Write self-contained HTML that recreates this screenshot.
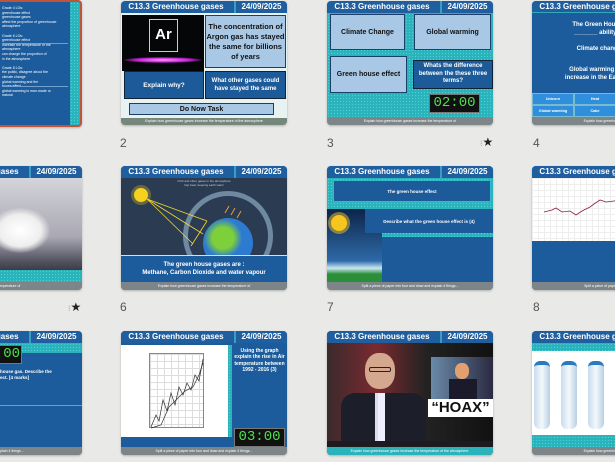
<!DOCTYPE html>
<html style="overflow:hidden"><head><meta charset="utf-8"><style>
*{margin:0;padding:0;box-sizing:border-box}
html,body{width:615px;height:462px;overflow:hidden}
body{background:#e9e9e8;position:relative;font-family:"Liberation Sans",sans-serif}
.s{position:absolute;width:166px;height:124px;border-radius:4px;overflow:hidden;background:#1d5c9c;box-shadow:0 1px 2px rgba(0,0,0,.25)}
.h{position:absolute;left:0;top:0;right:0;height:12px;background:#1f5f9f;color:#fff;font-weight:bold;font-size:8px;line-height:12px}
.h .t{position:absolute;left:0;width:110px;text-align:center}
.h .d{position:absolute;left:113px;width:53px;text-align:center;border-left:2px solid #35a0c0}
.f{position:absolute;left:0;right:0;bottom:0;height:8px;background:#7d8589;color:#fff;font-size:3.5px;line-height:8px;text-align:center}
.b{position:absolute;font-weight:bold;text-align:center;display:flex;align-items:center;justify-content:center}
.lb{background:#a8c8e6;border:1px solid #1b3f66;color:#111}
.db{background:#1c5a9a;color:#fff}
.n{position:absolute;font-size:12px;color:#555}
.teal{background:#2ab3bb;background-image:radial-gradient(#4fd0d6 0.6px,transparent 0.8px);background-size:3px 3px}
.tm{position:absolute;background:#111;border:1px solid #777;color:#4ee04e;font-family:"Liberation Mono",monospace;text-align:center}
</style></head><body>

<div class="s" style="left:-84px;top:0;height:127px;border:2px solid #c0533a;background:#1d5c9c">
<div style="position:absolute;right:0;top:0;bottom:0;width:10px" class="teal"></div>
<div style="position:absolute;left:84px;top:4px;width:68px;color:#fff;font-size:3.5px;line-height:4.6px">
Grade 4 LOs:<br>greenhouse effect<br>greenhouse gases<br>affect the proportion of greenhouse<br>atmosphere<br><br>Grade 6 LOs:<br>greenhouse effect<br>increase the temperature of the<br>atmosphere<br>can change the proportion of<br>in the atmosphere<br><br>Grade 8 LOs:<br>the public, disagree about the<br>climate change<br>global warming and the<br>house effect<br>global warming is man-made or<br>natural</div>
<div style="position:absolute;left:84px;right:12px;top:41px;height:1px;background:#6fa0d0"></div>
<div style="position:absolute;left:84px;right:12px;top:84px;height:1px;background:#6fa0d0"></div>
</div>

<div class="s" style="left:121px;top:1px;background:#e8f2f0">
<div class="h"><span class="t">C13.3 Greenhouse gases</span><span class="d">24/09/2025</span></div>
<div style="position:absolute;left:1px;top:14px;width:82px;height:56px;background:#050608">
<div style="position:absolute;left:27px;top:4px;width:29px;height:33px;border:1px solid #ccc;color:#fff;font-weight:bold;font-size:15px;text-align:center;line-height:30px">Ar</div>
<div style="position:absolute;left:2px;top:42px;width:78px;height:6px;border-radius:50%;background:radial-gradient(#ff9cff,#c020d0 50%,transparent 75%)"></div></div>
<div class="b lb" style="left:84px;top:14px;width:81px;height:53px;font-size:7.5px;line-height:10px;padding:0">The concentration of Argon gas has stayed the same for billions of years</div>
<div class="b db" style="left:3px;top:70px;width:80px;height:28px;font-size:6.5px;border:1px solid #123">Explain why?</div>
<div class="b db" style="left:84px;top:70px;width:81px;height:28px;font-size:6px;line-height:8px;border:1px solid #123">What other gases could have stayed the same</div>
<div class="b lb" style="left:8px;top:102px;width:145px;height:12px;font-size:7px">Do Now Task</div>
<div class="f" style="background:#75867a;height:7px;line-height:7px">Explain how greenhouse gases increase the temperature of the atmosphere</div>
</div>
<div class="n" style="left:120px;top:136px">2</div>

<div class="s teal" style="left:327px;top:1px">
<div class="h"><span class="t">C13.3 Greenhouse gases</span><span class="d">24/09/2025</span></div>
<div class="b lb" style="left:3px;top:13px;width:75px;height:36px;font-size:7px">Climate Change</div>
<div class="b lb" style="left:87px;top:13px;width:77px;height:36px;font-size:7px">Global warming</div>
<div class="b lb" style="left:3px;top:55px;width:77px;height:37px;font-size:7px">Green house effect</div>
<div class="b db" style="left:86px;top:59px;width:80px;height:29px;font-size:6px;line-height:7.5px;border:1px solid #123">Whats the difference between the these three terms?</div>
<div class="tm" style="left:102px;top:93px;width:51px;height:19px;font-size:14px;line-height:17px">02:00</div>
<div class="f">Explain how greenhouse gases increase the temperature of</div>
</div>
<div class="n" style="left:327px;top:136px">3</div>
<div style="position:absolute;left:480px;top:135px;font-size:12px;color:#222"><span style="color:#999;font-size:8px">⁝</span>★</div>

<div class="s" style="left:532px;top:1px;width:166px">
<div class="h" style="border-bottom:1px solid #3ab"><span class="t">C13.3 Greenhouse gases</span><span class="d">24/09/2025</span></div>
<div style="position:absolute;left:0;top:20px;width:166px;text-align:center;color:#fff;font-weight:bold;font-size:6px;line-height:8px">The Green House Effect is the<br>_______ ability to retain heat</div>
<div style="position:absolute;left:0;top:45px;width:166px;text-align:center;color:#fff;font-weight:bold;font-size:6px">Climate change is the slow</div>
<div style="position:absolute;left:0;top:65px;width:166px;text-align:center;color:#fff;font-weight:bold;font-size:6px;line-height:8px">Global warming is defined as an<br>increase in the Earth's temperature</div>
<div style="position:absolute;left:0;top:92px;width:166px;height:24px;background:#2f8fdc;color:#fff;font-size:3.8px;font-weight:bold">
<div style="position:absolute;left:0;top:0;width:42px;height:12px;border:1px solid #7bc;text-align:center;line-height:11px">Unicorn</div>
<div style="position:absolute;left:42px;top:0;width:42px;height:12px;border:1px solid #7bc;text-align:center;line-height:11px">Heat</div>
<div style="position:absolute;left:0;top:12px;width:42px;height:12px;border:1px solid #7bc;text-align:center;line-height:11px">Global warming</div>
<div style="position:absolute;left:42px;top:12px;width:42px;height:12px;border:1px solid #7bc;text-align:center;line-height:11px">Cake</div></div>
<div class="f">Explain how greenhouse gases increase</div>
</div>
<div class="n" style="left:533px;top:136px">4</div>

<div class="s" style="left:-84px;top:166px;background:#b8b8c0">
<div class="h"><span class="t">C13.3 Greenhouse gases</span><span class="d">24/09/2025</span></div>
<div style="position:absolute;left:84px;top:12px;width:82px;height:98px;background:linear-gradient(#d4d4da,#a9a8b4 60%,#535260 85%,#2c2c38)">
<div style="position:absolute;left:-10px;top:30px;width:60px;height:45px;border-radius:50%;background:radial-gradient(#fff,#eee 50%,transparent 72%)"></div></div>
<div class="teal" style="position:absolute;left:84px;top:104px;width:82px;height:12px"></div>
<div class="f">increase the temperature of</div>
</div>
<div style="position:absolute;left:68px;top:300px;font-size:12px;color:#222"><span style="color:#999;font-size:8px">⁝</span>★</div>

<div class="s" style="left:121px;top:166px;background:#2a3b52">
<div class="h"><span class="t">C13.3 Greenhouse gases</span><span class="d">24/09/2025</span></div>
<div style="position:absolute;left:0;top:13px;width:166px;color:#ccc;font-size:3px;text-align:center;line-height:4px">CO2 and other gases in the atmosphere<br>trap heat, keeping earth warm</div>
<div style="position:absolute;left:13px;top:22px;width:14px;height:14px;border-radius:50%;background:#f5d21d;box-shadow:0 0 0 3px rgba(245,210,29,.3)"></div>
<div style="position:absolute;left:62px;top:25px;width:90px;height:90px;border-radius:50%;border:5px solid #6f8aa0"></div>
<div style="position:absolute;left:82px;top:52px;width:50px;height:50px;border-radius:50%;background:radial-gradient(circle at 40% 40%,#7ed03a 25%,#2d7bd0 45%)"></div>
<svg style="position:absolute;left:0;top:0" width="166" height="124"><g stroke="#f2d832" stroke-width="0.8"><line x1="26" y1="33" x2="86" y2="55"/><line x1="26" y1="33" x2="82" y2="68"/><line x1="26" y1="33" x2="72" y2="78"/><line x1="86" y1="55" x2="70" y2="80"/></g><g stroke="#e89a40" stroke-width="1"><line x1="108" y1="40" x2="104" y2="47"/><line x1="114" y1="42" x2="110" y2="49"/><line x1="120" y1="45" x2="116" y2="52"/></g></svg>
<div style="position:absolute;left:0;top:89px;width:166px;height:28px;background:#1d5c9c;border-top:1px solid #ddd;color:#fff;font-weight:bold;font-size:6px;text-align:center;line-height:8px;padding-top:5px">The green house gases are :<br>Methane, Carbon Dioxide and water vapour</div>
<div class="f">Explain how greenhouse gases increase the temperature of</div>
</div>
<div class="n" style="left:120px;top:300px">6</div>

<div class="s teal" style="left:327px;top:166px">
<div class="h"><span class="t">C13.3 Greenhouse gases</span><span class="d">24/09/2025</span></div>
<div class="b db" style="left:6px;top:14px;width:158px;height:22px;font-size:4.5px;border:1px solid #3bc">The green house effect</div>
<div style="position:absolute;left:0;top:43px;width:55px;height:74px;background:linear-gradient(#0c2448,#2e6aa8 70%,#c9e6f2 80%,#2b8f3a 88%)">
<div style="position:absolute;left:4px;top:6px;width:16px;height:16px;border-radius:50%;background:#f6c520;box-shadow:0 0 0 3px rgba(246,197,32,.5)"></div></div>
<div class="b db" style="left:38px;top:43px;width:128px;height:24px;font-size:4.5px">Describe what the green house effect is (4)</div>
<div class="db" style="position:absolute;left:55px;top:71px;width:111px;height:46px"></div>
<div class="f">Split a piece of paper into four and draw and explain 4 things...</div>
</div>
<div class="n" style="left:327px;top:300px">7</div>

<div class="s" style="left:532px;top:166px">
<div class="h"><span class="t">C13.3 Greenhouse gases</span><span class="d">24/09/2025</span></div>
<div style="position:absolute;left:0;top:12px;width:166px;height:63px;background:#fff;background-image:linear-gradient(#eee 1px,transparent 1px),linear-gradient(90deg,#eee 1px,transparent 1px);background-size:6px 6px">
<svg width="166" height="63"><polyline fill="none" stroke="#8a2040" stroke-width="0.8" points="12,34 20,32 24,30 30,34 38,33 44,37 50,33 58,29 62,26 68,22 74,24 82,23 90,20 100,18 110,21 120,19"/></svg></div>
<div class="f">Split a piece of paper into four and draw</div>
</div>
<div class="n" style="left:533px;top:300px">8</div>

<div class="s" style="left:-84px;top:331px">
<div class="h"><span class="t">C13.3 Greenhouse gases</span><span class="d">24/09/2025</span></div>
<div class="teal" style="position:absolute;left:84px;top:12px;width:82px;height:10px"></div>
<div class="tm" style="left:60px;top:14px;width:46px;height:19px;font-size:14px;line-height:17px">03:00</div>
<div style="position:absolute;left:84px;top:38px;width:82px;color:#fff;font-weight:bold;font-size:4.5px;line-height:6px">house gas. Describe the<br>ect. [4 marks]</div>
<div style="position:absolute;left:84px;top:74px;width:82px;height:1px;background:#3bc"></div>
<div class="f">and draw and explain 4 things...</div>
</div>

<div class="s" style="left:121px;top:331px">
<div class="h"><span class="t">C13.3 Greenhouse gases</span><span class="d">24/09/2025</span></div>
<div style="position:absolute;left:0;top:14px;width:107px;height:92px;background:#fff">
<div style="position:absolute;left:28px;top:8px;width:55px;height:75px;border:1px solid #888;background-image:linear-gradient(#ddd 1px,transparent 1px),linear-gradient(90deg,#ddd 1px,transparent 1px);background-size:7px 7px"></div>
<svg style="position:absolute;left:0;top:0" width="107" height="92"><polyline fill="none" stroke="#333" stroke-width="0.7" points="30,82 35,70 38,76 42,55 46,66 50,48 54,60 58,42 62,50 66,38 70,45 74,30 78,36 82,14"/><polyline fill="none" stroke="#333" stroke-width="0.7" points="30,83 40,80 48,62 56,54 64,46 72,42 78,30 82,18"/></svg></div>
<div class="teal" style="position:absolute;left:107px;top:14px;width:4px;height:92px"></div>
<div style="position:absolute;left:111px;top:17px;width:55px;text-align:center;color:#fff;font-weight:bold;font-size:5px;line-height:6.3px">Using the graph explain the rise in Air temperature between 1992 - 2016 (3)</div>
<div class="tm" style="left:113px;top:97px;width:51px;height:19px;font-size:14px;line-height:17px">03:00</div>
<div class="f">Split a piece of paper into four and draw and explain 4 things...</div>
</div>

<div class="s" style="left:327px;top:331px;background:#1b1b20">
<div class="h"><span class="t">C13.3 Greenhouse gases</span><span class="d">24/09/2025</span></div>
<div style="position:absolute;left:0;top:12px;width:166px;height:98px;background:linear-gradient(90deg,#3a2a2c,#7a2a30 30%,#222 60%,#111)">
<div style="position:absolute;left:38px;top:10px;width:30px;height:36px;border-radius:45%;background:#d4a88e"></div>
<div style="position:absolute;left:42px;top:24px;width:22px;height:5px;border:1px solid #222;border-radius:2px"></div>
<div style="position:absolute;left:14px;top:50px;width:85px;height:48px;border-radius:14px 14px 0 0;background:#1c1e2a"></div>
<div style="position:absolute;left:48px;top:50px;width:10px;height:48px;background:#eef;border-left:3px solid #dde"></div>
<div style="position:absolute;left:104px;top:14px;width:62px;height:42px;background:linear-gradient(90deg,#6a8aa8,#2a2a40)">
<div style="position:absolute;left:24px;top:6px;width:14px;height:16px;border-radius:45%;background:#e2a070"></div>
<div style="position:absolute;left:18px;top:22px;width:28px;height:20px;background:#1a1a2a"></div></div>
<div style="position:absolute;left:101px;top:56px;width:65px;height:18px;background:#fff;color:#111;font-weight:900;font-size:15px;line-height:18px;text-align:center">“HOAX”</div>
</div>
<div class="f" style="background:#2ab3bb">Explain how greenhouse gases increase the temperature of the atmosphere.</div>
</div>

<div class="s teal" style="left:532px;top:331px">
<div class="h"><span class="t">C13.3 Greenhouse gases</span><span class="d">24/09/2025</span></div>
<div style="position:absolute;left:0;top:20px;width:166px;height:84px;background:#fff">
<div style="position:absolute;left:2px;top:10px;width:16px;height:68px;border-radius:6px;background:linear-gradient(90deg,#c8dcec,#f4f8fc,#b8cfe4);border-top:4px solid #2a7ac0"></div>
<div style="position:absolute;left:29px;top:10px;width:16px;height:68px;border-radius:6px;background:linear-gradient(90deg,#c8dcec,#f4f8fc,#b8cfe4);border-top:4px solid #2a7ac0"></div>
<div style="position:absolute;left:56px;top:10px;width:16px;height:68px;border-radius:6px;background:linear-gradient(90deg,#c8dcec,#f4f8fc,#b8cfe4);border-top:4px solid #2a7ac0"></div>
</div>
<div class="f">Explain how greenhouse gases increase</div>
</div>

</body></html>
